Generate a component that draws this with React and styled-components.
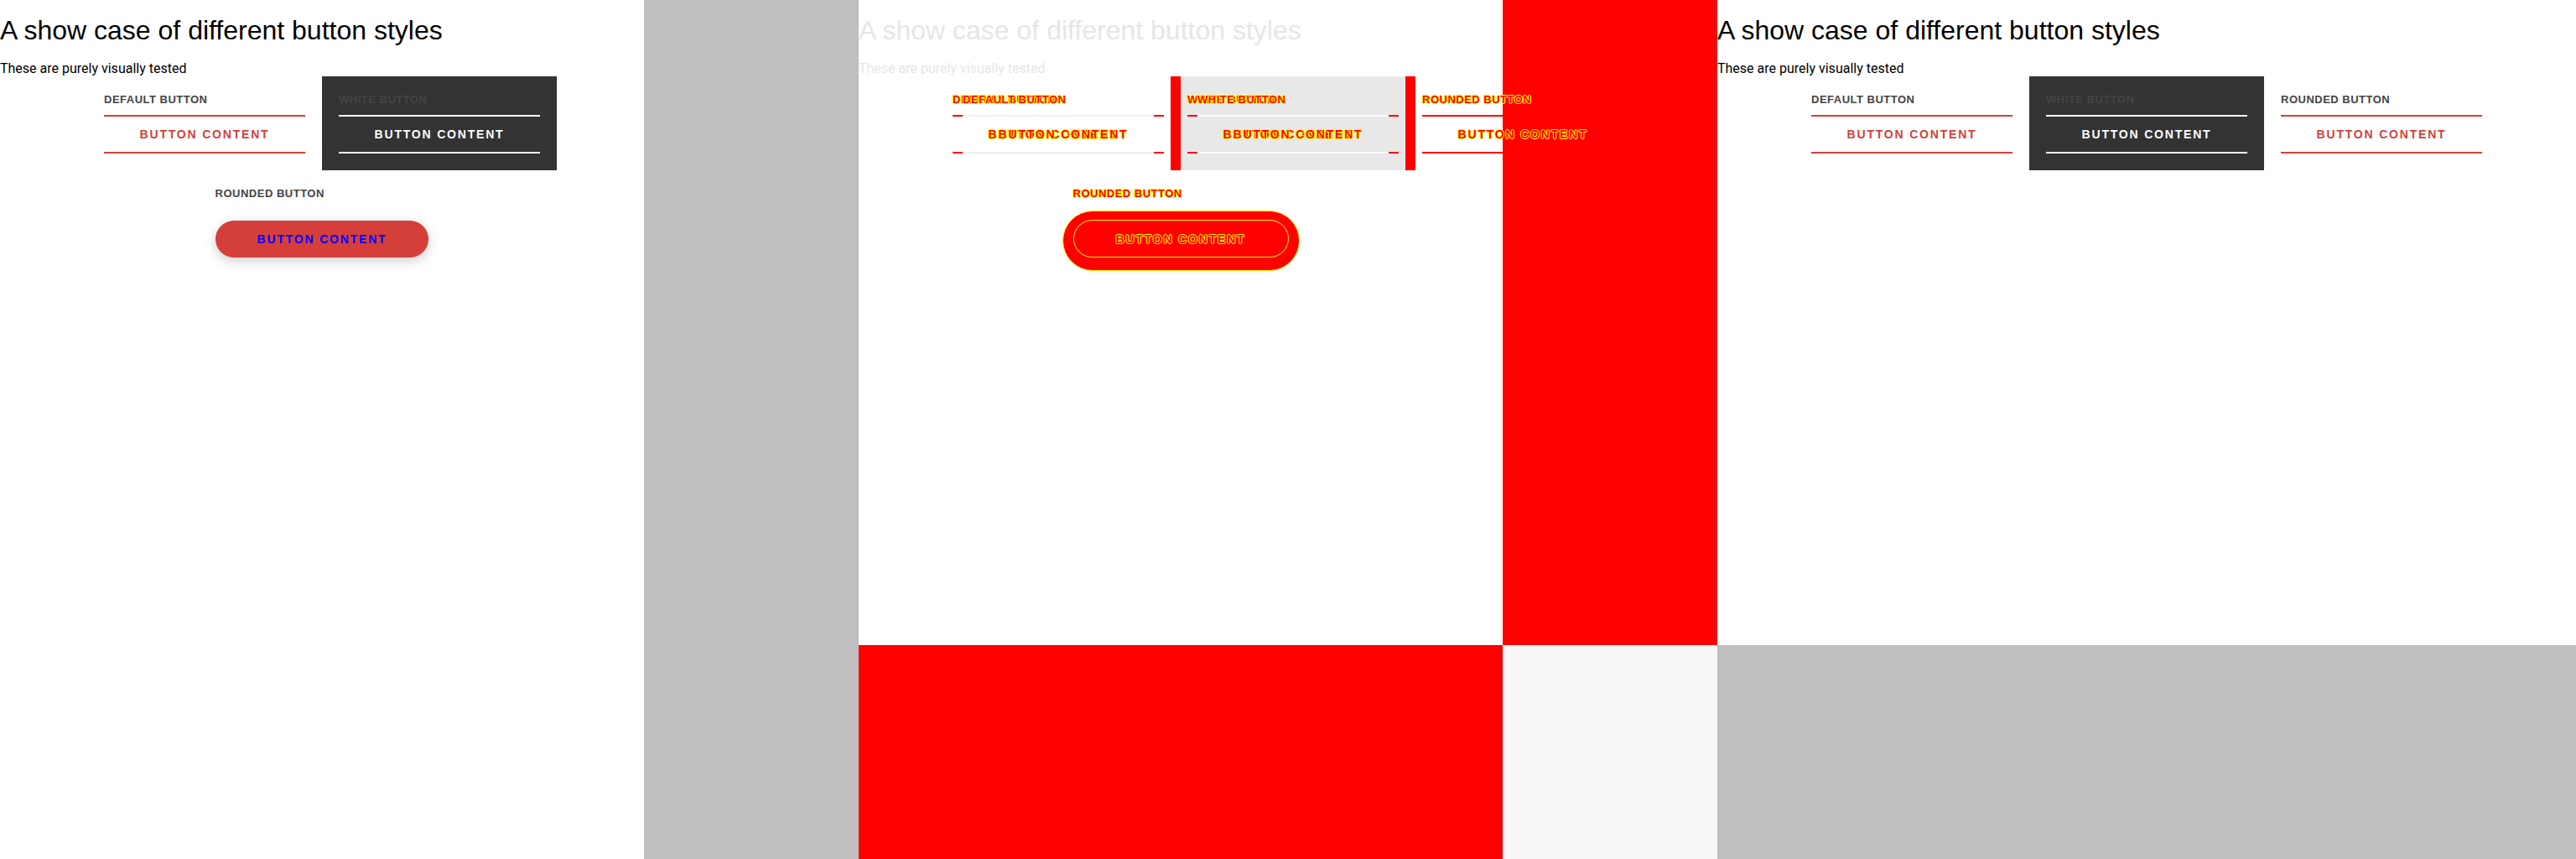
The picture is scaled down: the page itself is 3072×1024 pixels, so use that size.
import React from 'react';
import styled, { createGlobalStyle, css } from 'styled-components';

const RED = '#d43f3a';
const DIFF_RED = '#ff0000';
const DIFF_YELLOW = '#ffff00';

const Global = createGlobalStyle`
  html, body { margin: 0; padding: 0; background: #fff; }
  body { font-family: Roboto, "Liberation Sans", Arial, sans-serif; }
  * { box-sizing: border-box; }
`;

const Stage = styled.div`
  display: flex;
  width: 3072px;
  height: 1024px;
  overflow: hidden;
`;

const Panel = styled.section`
  flex: none;
  width: 1024px;
  height: 1024px;
  display: flex;
  flex-direction: ${(p) => p.$dir || 'row'};
  background: #bfbfbf;
  overflow: hidden;
`;

const Page = styled.div`
  flex: none;
  width: ${(p) => p.$w}px;
  height: ${(p) => p.$h}px;
  background: #fff;
  overflow: hidden;
`;

const Title = styled.h1`
  margin: 18px 0 0;
  font-family: "Liberation Sans", Arial, sans-serif;
  font-weight: 400;
  font-size: 32px;
  line-height: 37px;
  white-space: nowrap;
  color: ${(p) => (p.$faded ? '#e6e6e6' : '#000')};
`;

const Subtitle = styled.p`
  margin: 18px 0 0;
  font-family: Roboto, sans-serif;
  font-size: 16px;
  line-height: 18px;
  color: ${(p) => (p.$faded ? '#e6e6e6' : '#000')};
`;

const Showcase = styled.div`
  display: flex;
  flex-wrap: wrap;
  justify-content: center;
`;

const Item = styled.div`
  padding: 20px;
  display: flex;
  flex-direction: column;
  align-items: flex-start;
  background: ${(p) => (p.$dark ? '#333' : 'transparent')};
`;

const labelFont = css`
  font-family: "Liberation Sans", Arial, sans-serif;
  font-weight: 700;
  font-size: 13px;
  line-height: 15px;
  letter-spacing: 0.5px;
  text-transform: uppercase;
  white-space: nowrap;
`;

const Label = styled.span`
  ${labelFont};
  display: block;
  margin-bottom: 11px;
  color: #444;
`;

const buttonFont = css`
  font-family: "Liberation Sans", Arial, sans-serif;
  font-weight: 700;
  font-size: 14px;
  letter-spacing: 1.8px;
  text-transform: uppercase;
  white-space: nowrap;
`;

const LineButton = styled.button`
  ${buttonFont};
  width: 240px;
  height: 46px;
  margin: 0;
  padding: 0;
  background: transparent;
  border: none;
  border-top: 2px solid ${(p) => (p.$light ? '#fff' : RED)};
  border-bottom: 2px solid ${(p) => (p.$light ? '#fff' : RED)};
  color: ${(p) => (p.$light ? '#fff' : RED)};
  display: flex;
  align-items: center;
  justify-content: center;
`;

const PillButton = styled.button`
  ${buttonFont};
  height: 44px;
  margin: 14px 0 0;
  padding: 0 50px;
  border: none;
  border-radius: 22px;
  background: ${RED};
  color: #0000ff;
  box-shadow: 0 4px 14px rgba(0, 0, 0, 0.2);
  display: flex;
  align-items: center;
  justify-content: center;
`;

function Showroom({ width, height, pill }) {
  return (
    <Page $w={width} $h={height}>
      <Title>A show case of different button styles</Title>
      <Subtitle>These are purely visually tested</Subtitle>
      <Showcase>
        <Item>
          <Label>Default button</Label>
          <LineButton>Button content</LineButton>
        </Item>
        <Item $dark>
          <Label>White button</Label>
          <LineButton $light>Button content</LineButton>
        </Item>
        <Item>
          <Label>Rounded button</Label>
          {pill ? <PillButton>Button content</PillButton> : <LineButton>Button content</LineButton>}
        </Item>
      </Showcase>
    </Page>
  );
}

/* ---------- Diff view ---------- */

const DiffGrid = styled.section`
  flex: none;
  width: 1024px;
  height: 1024px;
  display: grid;
  grid-template-columns: 768px 256px;
  grid-template-rows: 769px 255px;
  overflow: hidden;
`;

const Fill = styled.div`
  background: ${(p) => p.$c};
`;

const DiffPage = styled.div`
  position: relative;
  z-index: 1;
  background: #fff;
  min-width: 0;
`;

const diffText = css`
  color: ${DIFF_RED};
  text-shadow: -1px 0 ${DIFF_YELLOW}, 1px 0 ${DIFF_YELLOW}, 0 -1px ${DIFF_YELLOW}, 0 1px ${DIFF_YELLOW};
`;

const DiffRow = styled.div`
  display: flex;
  height: 112px;
  padding-left: 92px;
`;

const DiffCell = styled.div`
  flex: none;
  width: ${(p) => p.$w || 280}px;
  padding: 20px 8px 0 ${(p) => (p.$edge ? 8 : 20)}px;
  border-left: ${(p) => (p.$edge ? `12px solid ${DIFF_RED}` : 'none')};
  background: ${(p) => (p.$shade ? '#e8e8e8' : 'transparent')};
`;

const Ghost = styled.div`
  display: grid;
  & > * { grid-area: 1 / 1; }
  & > *:nth-child(2) { margin-left: 12px; }
`;

const DiffLabel = styled.span`
  ${labelFont};
  ${diffText};
  display: block;
  height: 15px;
`;

const LabelWrap = styled.div`
  height: 26px;
`;

const DiffLine = styled.div`
  display: flex;
  width: ${(p) => p.$w}px;
  height: 2px;
`;

const Seg = styled.span`
  flex: ${(p) => (p.$grow ? 1 : 'none')};
  width: ${(p) => (p.$grow ? 'auto' : '12px')};
  background: ${(p) => p.$c};
`;

const DiffBtnText = styled.span`
  ${buttonFont};
  ${diffText};
  width: 240px;
  height: 42px;
  display: flex;
  align-items: center;
  justify-content: center;
`;

const SplitLine = ({ mid }) => (
  <DiffLine $w={252}>
    <Seg $c={DIFF_RED} />
    <Seg $grow $c={mid} />
    <Seg $c={DIFF_RED} />
  </DiffLine>
);

const DiffRowTwo = styled.div`
  display: flex;
  justify-content: center;
`;

const DiffItem = styled.div`
  padding: 20px;
  display: flex;
  flex-direction: column;
  align-items: flex-start;
`;

const ShadowBlob = styled.div`
  width: 283px;
  height: 72px;
  margin: 2px -13px 0;
  padding: 10px 12px 0;
  border: 1px solid ${DIFF_YELLOW};
  border-radius: 36px;
  background: ${DIFF_RED};
`;

const PillBlob = styled.div`
  ${buttonFont};
  ${diffText};
  height: 45px;
  border: 1px solid ${DIFF_YELLOW};
  border-radius: 23px;
  background: ${DIFF_RED};
  display: flex;
  align-items: center;
  justify-content: center;
`;

function DiffView() {
  return (
    <DiffGrid>
      <DiffPage>
        <Title $faded>A show case of different button styles</Title>
        <Subtitle $faded>These are purely visually tested</Subtitle>
        <DiffRow>
          <DiffCell>
            <LabelWrap>
              <Ghost>
                <DiffLabel>Default button</DiffLabel>
                <DiffLabel>Default button</DiffLabel>
              </Ghost>
            </LabelWrap>
            <SplitLine mid="#efefef" />
            <Ghost>
              <DiffBtnText>Button content</DiffBtnText>
              <DiffBtnText>Button content</DiffBtnText>
            </Ghost>
            <SplitLine mid="#efefef" />
          </DiffCell>
          <DiffCell $edge $shade>
            <LabelWrap>
              <Ghost>
                <DiffLabel>White button</DiffLabel>
                <DiffLabel>White button</DiffLabel>
              </Ghost>
            </LabelWrap>
            <SplitLine mid="#ffffff" />
            <Ghost>
              <DiffBtnText>Button content</DiffBtnText>
              <DiffBtnText>Button content</DiffBtnText>
            </Ghost>
            <SplitLine mid="#ffffff" />
          </DiffCell>
          <DiffCell $edge $w={300}>
            <LabelWrap>
              <DiffLabel>Rounded button</DiffLabel>
            </LabelWrap>
            <DiffLine $w={240}>
              <Seg $grow $c={DIFF_RED} />
            </DiffLine>
            <DiffBtnText>Button content</DiffBtnText>
            <DiffLine $w={240}>
              <Seg $grow $c={DIFF_RED} />
            </DiffLine>
          </DiffCell>
        </DiffRow>
        <DiffRowTwo>
          <DiffItem>
            <LabelWrap>
              <DiffLabel>Rounded button</DiffLabel>
            </LabelWrap>
            <ShadowBlob>
              <PillBlob>Button content</PillBlob>
            </ShadowBlob>
          </DiffItem>
        </DiffRowTwo>
      </DiffPage>
      <Fill $c={DIFF_RED} />
      <Fill $c={DIFF_RED} />
      <Fill $c="#f7f7f7" />
    </DiffGrid>
  );
}

export default function App() {
  return (
    <>
      <Global />
      <Stage>
        <Panel>
          <Showroom width={768} height={1024} pill />
        </Panel>
        <DiffView />
        <Panel $dir="column">
          <Showroom width={1024} height={769} />
        </Panel>
      </Stage>
    </>
  );
}
